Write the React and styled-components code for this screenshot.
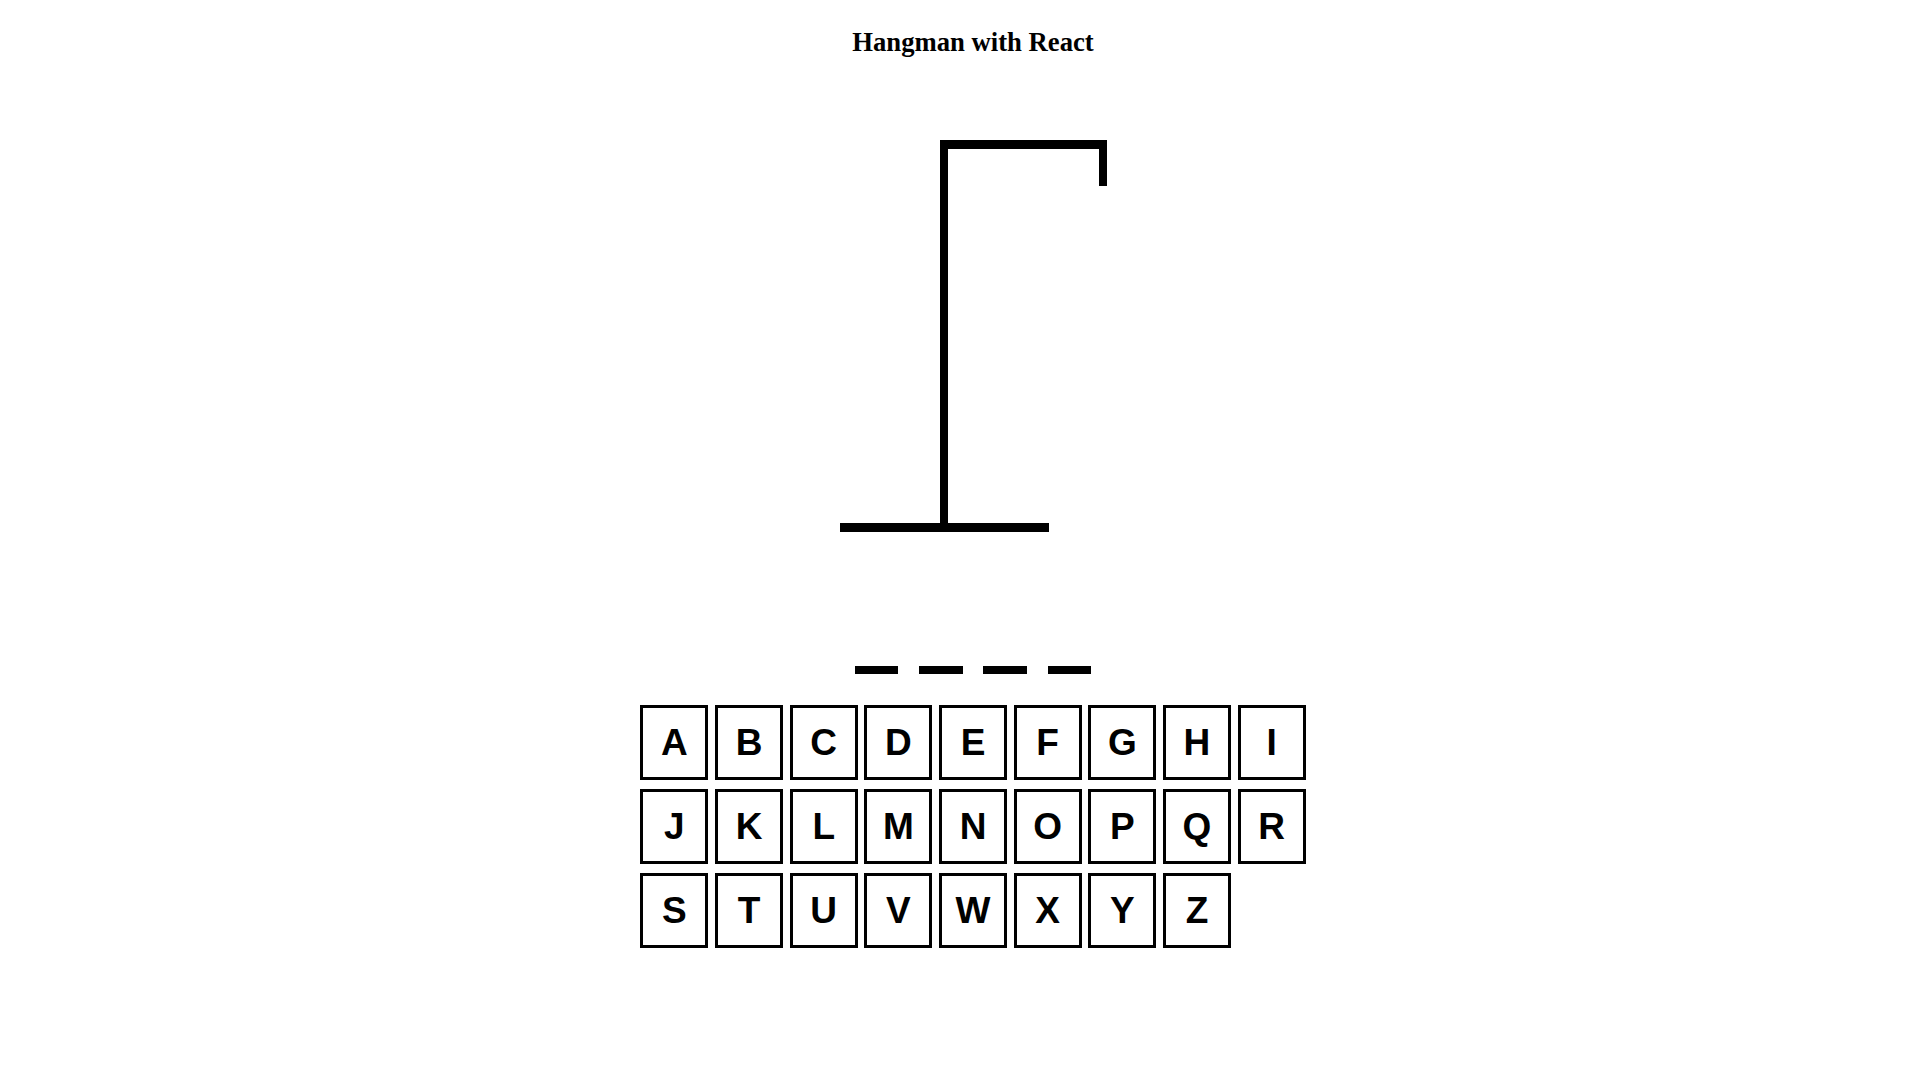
import React, { useState } from 'react';
import styled, { createGlobalStyle } from 'styled-components';

const GlobalStyle = createGlobalStyle`
  body {
    margin: 0;
    background: #fff;
  }
`;

const Page = styled.main`
  display: flex;
  flex-direction: column;
  align-items: center;
  padding-left: 26px;
`;

const Title = styled.h1`
  margin: 27px 0 0;
  font-family: "Liberation Serif", "Times New Roman", serif;
  font-size: 26.67px;
  line-height: 30px;
  font-weight: bold;
  color: #000;
`;

const Gallows = styled.svg`
  display: block;
  margin-top: 73px;
`;

const Word = styled.div`
  display: flex;
  gap: 20.8px;
  margin-top: 126px;
`;

const Dash = styled.span`
  display: block;
  width: 43.5px;
  height: 8px;
  background: #000;
`;

const Keyboard = styled.div`
  display: grid;
  grid-template-columns: repeat(9, 68px);
  grid-auto-rows: 75px;
  column-gap: 6.67px;
  row-gap: 9px;
  margin-top: 31px;
`;

const Key = styled.button`
  box-sizing: border-box;
  padding: 0;
  border: 3px solid #000;
  border-radius: 0;
  background: #fff;
  color: #000;
  font-family: "Liberation Sans", Arial, sans-serif;
  font-size: 37px;
  font-weight: bold;
  cursor: pointer;
  opacity: ${props => (props.$used ? 0.4 : 1)};
`;

const letters = 'ABCDEFGHIJKLMNOPQRSTUVWXYZ'.split('');

export default function App() {
  const [guessed, setGuessed] = useState([]);
  const word = 'CODE';

  return (
    <Page>
      <GlobalStyle />
      <Title>Hangman with React</Title>
      <Gallows width="300" height="410" viewBox="0 0 300 410">
        <rect x="117" y="10" width="167" height="9" fill="#000" />
        <rect x="276" y="10" width="8" height="46" fill="#000" />
        <rect x="117" y="10" width="8" height="392" fill="#000" />
        <rect x="17" y="393" width="209" height="9" fill="#000" />
      </Gallows>
      <Word>
        {word.split('').map((c, i) => <Dash key={i} />)}
      </Word>
      <Keyboard>
        {letters.map(l => (
          <Key
            key={l}
            $used={guessed.includes(l) && false}
            onClick={() => setGuessed(g => (g.includes(l) ? g : [...g, l]))}
          >
            {l}
          </Key>
        ))}
      </Keyboard>
    </Page>
  );
}
